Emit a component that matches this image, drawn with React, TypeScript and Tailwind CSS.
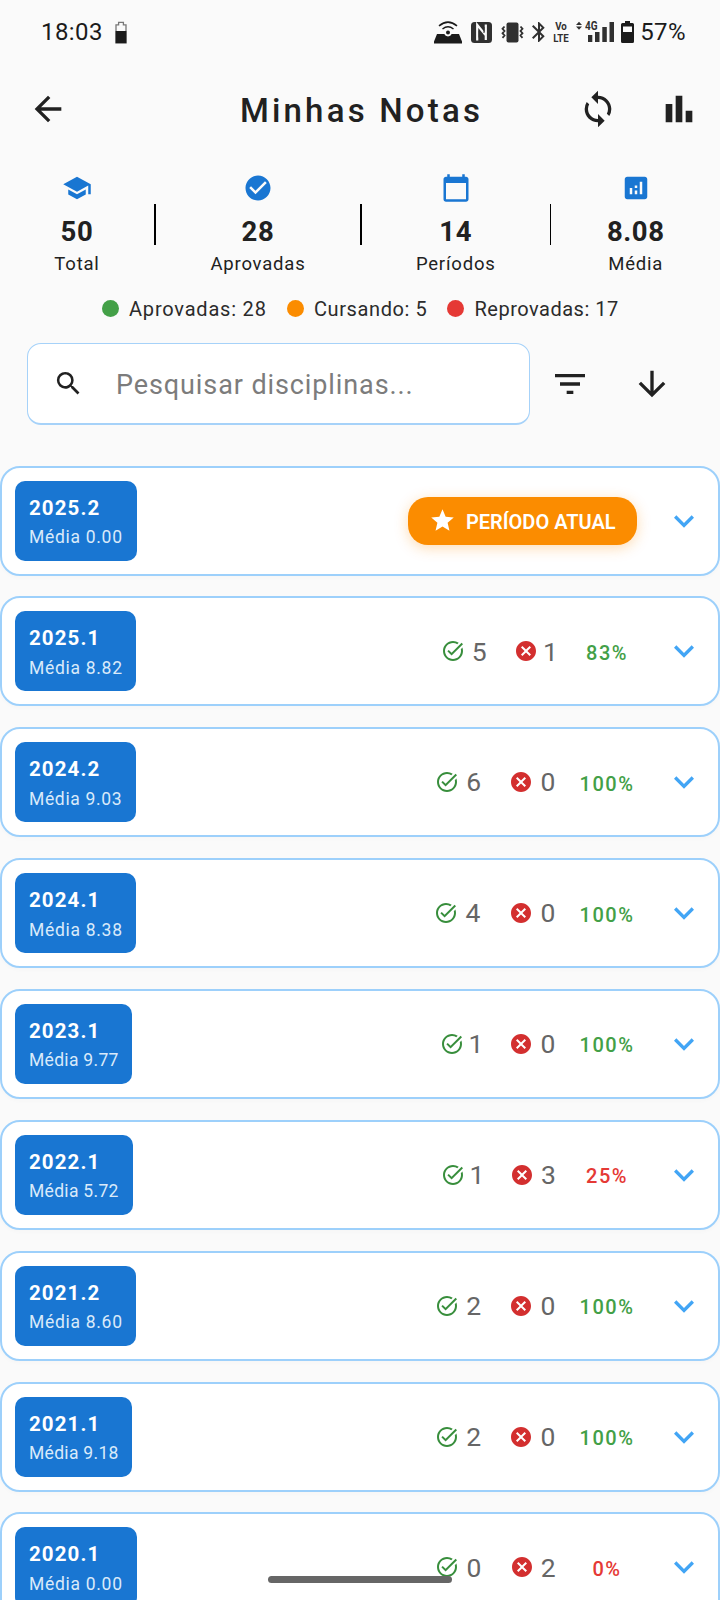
import type { ReactNode } from "react";
import {
  MdAnalytics,
  MdArrowBack,
  MdArrowDownward,
  MdBluetooth,
  MdCancel,
  MdCheckCircle,
  MdExpandMore,
  MdFilterList,
  MdSchool,
  MdSearch,
  MdStar,
  MdSync,
  MdTaskAlt,
} from "react-icons/md";

type Period = {
  name: string;
  average: string;
  badge: string;
  passed?: number;
  failed?: number;
  rate?: string;
  low?: boolean;
};

const periods: Period[] = [
  { name: "2025.2", average: "0.00", badge: "w-[122px] tracking-[0.7px]" },
  { name: "2025.1", average: "8.82", badge: "w-[121px] tracking-[0.7px]", passed: 5, failed: 1, rate: "83%" },
  { name: "2024.2", average: "9.03", badge: "w-[120.5px] tracking-[0.65px]", passed: 6, failed: 0, rate: "100%" },
  { name: "2024.1", average: "8.38", badge: "w-[121px] tracking-[0.7px]", passed: 4, failed: 0, rate: "100%" },
  { name: "2023.1", average: "9.77", badge: "w-[117px] tracking-[0.3px]", passed: 1, failed: 0, rate: "100%" },
  { name: "2022.1", average: "5.72", badge: "w-[117.5px] tracking-[0.3px]", passed: 1, failed: 3, rate: "25%", low: true },
  { name: "2021.2", average: "8.60", badge: "w-[121px] tracking-[0.7px]", passed: 2, failed: 0, rate: "100%" },
  { name: "2021.1", average: "9.18", badge: "w-[117px] tracking-[0.3px]", passed: 2, failed: 0, rate: "100%" },
  { name: "2020.1", average: "0.00", badge: "w-[122px] tracking-[0.7px]", passed: 0, failed: 2, rate: "0%", low: true },
];

const digitWidth = [
  "w-[16px]",
  "w-[11px]",
  "w-[15.5px]",
  "w-[15px]",
  "w-[17px]",
  "w-[14.5px]",
  "w-[15.5px]",
];

function CalendarIcon() {
  return (
    <svg viewBox="0 0 24 24" className="size-[30px]" fill="currentColor">
      <path d="M20 3h-1V1h-2v2H7V1H5v2H4c-1.1 0-2 .9-2 2v16c0 1.1.9 2 2 2h16c1.1 0 2-.9 2-2V5c0-1.1-.9-2-2-2zm0 18H4V8h16v13z" />
    </svg>
  );
}

function StatusBar() {
  return (
    <div className="flex h-16 items-center pl-[41px] pr-[34px] text-[#1b1b1b]">
      <span className="text-[24px] leading-none tracking-[0.4px]">18:03</span>
      <svg viewBox="0 0 12 23" className="ml-[12px] mt-px h-[23px] w-3" fill="none">
        <path d="M1 3.8h2.6V1.4h4.8v2.4H11V22H1z" stroke="#777" strokeWidth="1.3" />
        <path d="M.6 10h10.8v12H.6z" fill="#1b1b1b" />
      </svg>
      <div className="ml-auto flex items-center">
        <svg viewBox="0 0 28 23" className="mr-px h-[23px] w-7" fill="none" stroke="#1b1b1b" strokeWidth="1.5">
          <path d="M5 4.800Q14-2.600 23 4.800M8.500 8Q14 3.600 19.500 8" />
          <path d="M3 13h7.300a4 4 0 0 0 7.400 0H25L28 20.500V22.500H0V20.500z" fill="#1b1b1b" stroke="none" />
          <circle cx="14" cy="11.4" r="2" fill="#1b1b1b" stroke="none" />
        </svg>
        <svg viewBox="0 0 21 21" className="ml-2 size-[21px]">
          <rect width="21" height="21" rx="3.5" fill="#303030" />
          <path d="M6.2 18.500V2.800L14.800 13.500V2.500M6.200 6.500V18.500M14.800 18V5" stroke="#fafafa" strokeWidth="2.200" fill="none" />
          <path d="M8 8.500v7M13 5v6" stroke="#303030" strokeWidth="1" />
        </svg>
        <svg viewBox="0 0 23 21" className="ml-[9px] h-[21px] w-[23px]" fill="none" stroke="#303030" strokeWidth="1.8">
          <rect x="5.5" y=".5" width="12" height="20" rx="2" fill="#303030" stroke="none" />
          <path d="M3.500 4.500 1.500 6.800 3.500 9 1.500 11.200 3.500 13.500 1.500 15.800M19.500 4.500 21.500 6.800 19.500 9 21.500 11.200 19.500 13.500 21.500 15.800" />
        </svg>
        <MdBluetooth className="ml-[3px] size-[24px] text-[#303030]" />
        <div className="ml-px flex w-[18px] scale-x-[0.88] flex-col items-center gap-px text-[11px] font-bold text-[#303030]">
          <span className="h-[11px] leading-[11px]">Vo</span>
          <span className="h-[11px] leading-[11px]">LTE</span>
        </div>
        <div className="relative ml-[6px] h-[22px] w-[39px]">
          <svg viewBox="0 0 39 22" className="h-[22px] w-[39px]" fill="#303030">
            <path d="M0 4 3 .8 6 4zM0 5.5h6L3 8.7z" />
            <path d="M12 14h4.300v7H12zM19 11h4.500v10H19zM26.300 6h4.500v15h-4.500zM33.500 1H38v20h-4.500z" />
          </svg>
          <span className="absolute left-[9px] top-0 origin-left scale-x-[0.8] text-[12.5px] font-bold leading-[10px] text-[#303030]">4G</span>
        </div>
        <svg viewBox="0 0 13 22" className="ml-[6px] h-[22px] w-[13px]">
          <path d="M1.500 2H4V0h5v2h2.500Q13 2 13 3.500v17q0 1.500-1.500 1.500h-10Q0 22 0 20.500v-17Q0 2 1.500 2z" fill="#1b1b1b" />
          <path d="M2 5.500h9V11H2z" fill="#fafafa" />
        </svg>
        <span className="ml-[6px] text-[24px] leading-none tracking-[0.4px]">57%</span>
      </div>
    </div>
  );
}

function Header() {
  return (
    <header className="grid h-[89px] grid-cols-[220px_280px_220px] items-center text-[#212121]">
      <MdArrowBack className="ml-7 size-10" />
      <h1 className="pl-[3px] pt-[3px] text-center text-[33px] font-medium leading-none tracking-[3.2px]">Minhas Notas</h1>
      <div className="flex pl-[78px]">
        <MdSync className="size-10" />
        <svg viewBox="0 0 24 24" className="ml-[41px] size-10" fill="currentColor">
          <path d="M4 9h4v11H4zm12 4h4v7h-4zm-6-9h4v16h-4z" />
        </svg>
      </div>
    </header>
  );
}

function Stat({ icon, value, label }: { icon: ReactNode; value: string; label: string }) {
  return (
    <div className="flex flex-col items-center">
      <div className="text-[#1976d2]">{icon}</div>
      <div className="mt-[13px] text-[27.5px] font-bold leading-8 tracking-[0.6px]">{value}</div>
      <div className="mt-1 text-[18.5px] leading-6 tracking-[0.8px]">{label}</div>
    </div>
  );
}

function Stats() {
  const divider = "mt-[31px] h-[41px] bg-black";
  return (
    <section className="grid h-[124px] grid-cols-[154px_2px_204px_2px_187.5px_2px_168.5px] pt-5 text-[#212121]">
      <Stat icon={<MdSchool className="size-[30px]" />} value="50" label="Total" />
      <div className={`${divider} w-0.5`} />
      <Stat icon={<MdCheckCircle className="size-[30px]" />} value="28" label="Aprovadas" />
      <div className={`${divider} w-0.5`} />
      <Stat icon={<CalendarIcon />} value="14" label="Períodos" />
      <div className={`${divider} w-[1.5px]`} />
      <Stat icon={<MdAnalytics className="size-[30px]" />} value="8.08" label="Média" />
    </section>
  );
}

function Legend() {
  return (
    <section className="flex h-[62px] items-center pl-[101.5px] text-[20px] leading-none tracking-[0.7px] text-[#2b2b2b]">
      <i className="mr-[10.5px] size-[17px] rounded-full bg-[#43a047]" />
      <span className="w-[157.5px] pt-0.5 tracking-[0.8px]">Aprovadas: 28</span>
      <i className="mr-[10.5px] size-[17px] rounded-full bg-[#fb8c00]" />
      <span className="w-[132.5px] pt-0.5 tracking-[0.6px]">Cursando: 5</span>
      <i className="mr-[11px] size-[17px] rounded-full bg-[#e53935]" />
      <span className="pt-0.5 tracking-[0.5px]">Reprovadas: 17</span>
    </section>
  );
}

function SearchRow() {
  return (
    <section className="mt-1 flex items-center pl-[27px] text-[#212121]">
      <div className="flex h-[82px] w-[503px] items-center rounded-[14px] border border-b-2 border-[#a6d2f9] bg-white pl-[24.5px]">
        <MdSearch className="size-[31px]" />
        <span className="ml-[32.5px] pt-[3px] text-[27px] leading-none tracking-[0.9px] text-[#7c7c7c]">Pesquisar disciplinas...</span>
      </div>
      <MdFilterList className="ml-5 size-10" />
      <MdArrowDownward className="ml-[42px] size-10" />
    </section>
  );
}

function Counter({ icon, value }: { icon: ReactNode; value: number }) {
  return (
    <div className="flex items-center">
      {icon}
      <span className={`ml-[7px] flex justify-center pt-px text-[26.5px] leading-none text-[#666666] ${digitWidth[value]}`}>{value}</span>
    </div>
  );
}

function PeriodCard({ period }: { period: Period }) {
  return (
    <article className="flex h-[110px] shrink-0 items-center rounded-[20px] border-2 border-[#9dd0fb] bg-white pl-[13px] pr-[14px] shadow-[0_2px_4px_rgba(0,0,0,0.02)]">
      <div className={`flex h-20 flex-col rounded-[10px] bg-[#1976d2] pl-[14px] pt-[15px] text-white ${period.badge}`}>
        <span className="text-[20.5px] font-bold leading-6 tracking-[1.1px]">{period.name}</span>
        <span className="mt-[5.5px] whitespace-nowrap text-[17.5px] leading-6 text-[#d9eafa]">Média {period.average}</span>
      </div>
      {period.rate ? (
        <div className="ml-auto flex items-center">
          <Counter icon={<MdTaskAlt className="size-6 text-[#388e3c]" />} value={period.passed!} />
          <div className="w-[27.5px]" />
          <Counter icon={<MdCancel className="size-6 text-[#d32f2f]" />} value={period.failed!} />
          <span
            className={`ml-[11px] w-20 pt-[3px] text-center text-[20px] font-medium leading-none tracking-[1.5px] ${
              period.low ? "text-[#e53935]" : "text-[#43a047]"
            }`}
          >
            {period.rate}
          </span>
          <div className="w-[17px]" />
        </div>
      ) : (
        <div className="ml-auto mr-[27px] flex h-12 w-[229px] items-center rounded-[20px] bg-[#fb8c00] pl-[20.5px] text-white shadow-[0_3px_14px_rgba(251,140,0,0.3)]">
          <MdStar className="size-[27px]" />
          <span className="ml-[10.5px] whitespace-nowrap pt-0.5 text-[20px] font-semibold leading-none">PERÍODO ATUAL</span>
        </div>
      )}
      <MdExpandMore className="size-10 text-[#42a5f5]" />
    </article>
  );
}

export default function App() {
  return (
    <main className="relative h-[1600px] w-[720px] overflow-hidden bg-[#fafafa] font-['Roboto',sans-serif]">
      <StatusBar />
      <Header />
      <Stats />
      <Legend />
      <SearchRow />
      <section className="mt-[40.5px] flex flex-col gap-[20.87px]">
        {periods.map((period) => (
          <PeriodCard key={period.name} period={period} />
        ))}
      </section>
      <div className="absolute left-[268px] top-[1576px] h-[7px] w-[184px] rounded-full bg-[#666666]" />
    </main>
  );
}
